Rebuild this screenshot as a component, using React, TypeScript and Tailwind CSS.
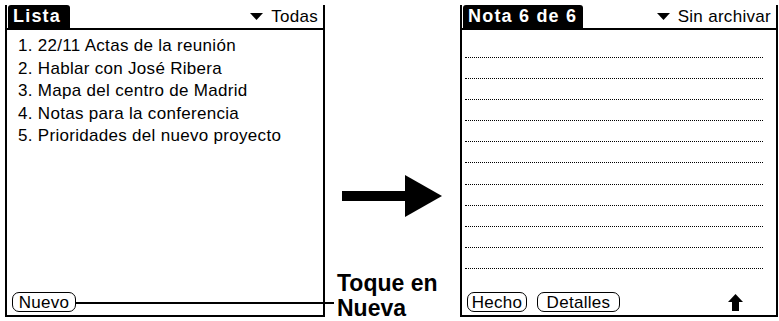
import React from "react";

function Tri() {
  return (
    <svg width="13" height="7" viewBox="0 0 13 7" className="shrink-0">
      <polygon points="0,0 13,0 6.5,7" fill="black" />
    </svg>
  );
}

function Header({ title, tabW, right }: { title: string; tabW: string; right: string }) {
  return (
    <div className="h-[25px] flex items-stretch border-b-2 border-black pl-[1px]">
      <div
        className={`${tabW} bg-black text-white font-bold rounded-t-[3px] pl-[5px] flex items-center text-[18px] tracking-[1.2px]`}
      >
        {title}
      </div>
      <div className="ml-auto flex items-center gap-[8px] pr-[5px] text-[17px] tracking-[0.3px]">
        <Tri />
        <span>{right}</span>
      </div>
    </div>
  );
}

function Btn({ w, children }: { w: string; children: React.ReactNode }) {
  return (
    <div
      className={`${w} h-[20px] border-[1.5px] border-black rounded-[7px] flex items-center justify-center text-[17px] tracking-[0.3px] leading-none`}
    >
      {children}
    </div>
  );
}

export default function App() {
  const items = [
    "1. 22/11 Actas de la reunión",
    "2. Hablar con José Ribera",
    "3. Mapa del centro de Madrid",
    "4. Notas para la conferencia",
    "5. Prioridades del nuevo proyecto",
  ];
  const lines = Array.from({ length: 11 }, (_, i) => i);
  return (
    <div className="relative w-[779px] h-[321px] bg-white overflow-hidden flex items-start text-black font-['Liberation_Sans',Arial,sans-serif]">
      {/* Left screen */}
      <div className="ml-[5px] mt-[5px] w-[320px] h-[312px] shrink-0 border-x-2 border-b-2 border-black flex flex-col">
        <Header title="Lista" tabW="w-[62px]" right="Todas" />
        <div className="mt-[5px] pl-[11px] text-[17px] leading-[22.5px] tracking-[0.3px]">
          {items.map((t) => (
            <div key={t}>{t}</div>
          ))}
        </div>
        <div className="mt-auto mb-[3px] ml-[5px] flex">
          <Btn w="w-[64px]">Nuevo</Btn>
        </div>
      </div>

      {/* Middle */}
      <div className="w-[135px] h-full shrink-0 flex flex-col">
        <svg width="101" height="42" viewBox="0 0 101 42" className="mt-[175px] ml-[17px]">
          <rect x="0" y="16" width="64" height="10" fill="black" />
          <polygon points="63,0 100,21 63,42" fill="black" />
        </svg>
        <div className="mt-[54px] ml-[12px] font-bold text-[23px] leading-[25px] tracking-[0px]">
          <div>Toque en</div>
          <div>Nueva</div>
        </div>
      </div>

      {/* Right screen */}
      <div className="mt-[5px] w-[318px] h-[312px] shrink-0 border-x-2 border-b-2 border-black flex flex-col">
        <Header title="Nota 6 de 6" tabW="w-[120px]" right="Sin archivar" />
        <div className="pt-[6.9px] ml-[3px] w-[298px] flex flex-col">
          {lines.map((i) => (
            <div key={i} className="h-[21.1px] border-b border-dotted border-black" />
          ))}
        </div>
        <div className="mt-auto mb-[3px] ml-[5px] mr-[33px] flex items-center gap-[10px]">
          <Btn w="w-[60px]">Hecho</Btn>
          <Btn w="w-[83px]">Detalles</Btn>
          <svg width="15" height="17" viewBox="0 0 15 17" className="ml-auto">
            <polygon points="7.5,0 15,8 0,8" fill="black" />
            <rect x="4" y="7.5" width="7" height="9.5" fill="black" />
          </svg>
        </div>
      </div>

      {/* Callout line */}
      <div className="absolute left-[76px] top-[302px] w-[258px] h-[2px] bg-black" />
    </div>
  );
}
